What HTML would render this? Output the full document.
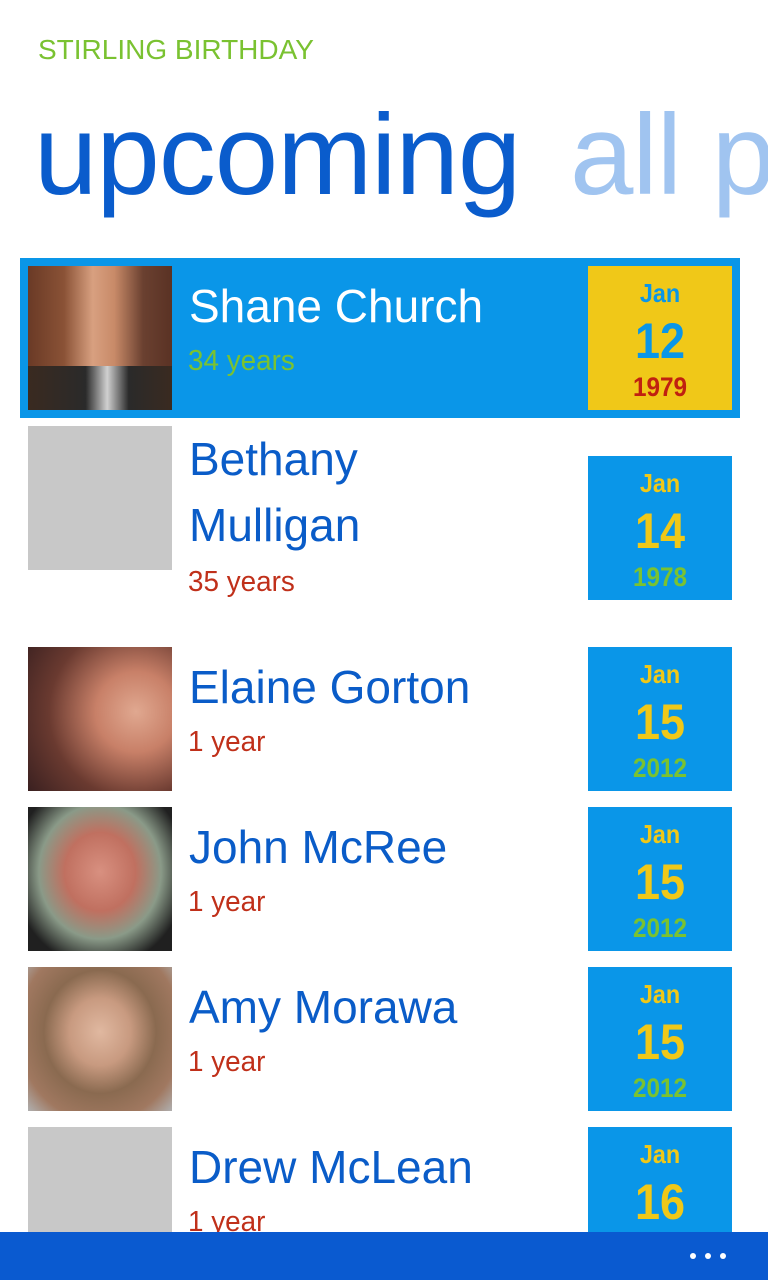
<!DOCTYPE html>
<html><head><style>
body{margin:0;width:768px;height:1280px;overflow:hidden;background:#fff;font-family:"Liberation Sans",sans-serif;position:relative}
.a{position:absolute}
.t{left:38px;top:34px;font-size:28px;color:#7ac231;}
.h{top:90px;font-size:114px;color:#0a5ccc;white-space:nowrap;letter-spacing:-1px}
.ph{left:28px;width:144px;height:144px;background:#c8c8c8}
.nm{left:189px;font-size:46px;color:#0a5cc8;white-space:nowrap;line-height:66px}
.ag{left:188px;font-size:29px;color:#c0301a;white-space:nowrap;transform:scaleX(.96);transform-origin:left}
.d{left:588px;width:144px;height:144px;background:#0a96e8;text-align:center;font-weight:bold;color:#f0c818}
.d .m{position:absolute;left:0;right:0;top:12px;font-size:26px;transform:scaleX(.9)}
.d .n{position:absolute;left:0;right:0;top:46px;font-size:50px;transform:scaleX(.9)}
.d .y{position:absolute;left:0;right:0;top:106px;font-size:27px;color:#7ac231;transform:scaleX(.9)}
</style></head><body>
<div class="a t">STIRLING BIRTHDAY</div>
<div class="a h" style="left:34px">upcoming</div>
<div class="a h" style="left:570px;color:#a0c4f0">all p</div>

<div class="a" style="left:20px;top:258px;width:720px;height:160px;background:#0a96e8"></div>
<div class="a ph" style="top:266px;background:linear-gradient(90deg,#6a3a26 0%,#8a5236 25%,#d8a080 45%,#c88a68 60%,#6a4030 80%,#5a3224)"></div>
<div class="a ph" style="top:366px;height:44px;background:linear-gradient(90deg,#3a2a20,#2a2a2a 40%,#d0d0d0 55%,#2a2a2a 70%,#3a2a20)"></div>
<div class="a nm" style="top:273px;color:#fff">Shane Church</div>
<div class="a ag" style="top:345px;color:#7ac231">34 years</div>
<div class="a d" style="top:266px;background:#f0c818;color:#0a96e8"><div class="m">Jan</div><div class="n">12</div><div class="y" style="color:#c02010">1979</div></div>

<div class="a ph" style="top:426px"></div>
<div class="a nm" style="top:426px">Bethany<br>Mulligan</div>
<div class="a ag" style="top:566px">35 years</div>
<div class="a d" style="top:456px"><div class="m">Jan</div><div class="n">14</div><div class="y">1978</div></div>

<div class="a ph" style="top:647px;background:radial-gradient(circle at 75% 45%,#e0a890 0,#c88068 30%,#6a3a30 65%,#3a2020)"></div>
<div class="a nm" style="top:654px">Elaine Gorton</div>
<div class="a ag" style="top:726px">1 year</div>
<div class="a d" style="top:647px"><div class="m">Jan</div><div class="n">15</div><div class="y">2012</div></div>

<div class="a ph" style="top:807px;background:radial-gradient(ellipse at 50% 45%,#d89080 0,#c07060 35%,#8a9a88 60%,#202020 85%)"></div>
<div class="a nm" style="top:814px">John McRee</div>
<div class="a ag" style="top:886px">1 year</div>
<div class="a d" style="top:807px"><div class="m">Jan</div><div class="n">15</div><div class="y">2012</div></div>

<div class="a ph" style="top:967px;background:radial-gradient(ellipse at 50% 45%,#e0b8a0 0,#c89a80 30%,#8a6a50 55%,#a07860 80%,#b0b0b0)"></div>
<div class="a nm" style="top:974px">Amy Morawa</div>
<div class="a ag" style="top:1046px">1 year</div>
<div class="a d" style="top:967px"><div class="m">Jan</div><div class="n">15</div><div class="y">2012</div></div>

<div class="a ph" style="top:1127px"></div>
<div class="a nm" style="top:1134px">Drew McLean</div>
<div class="a ag" style="top:1206px">1 year</div>
<div class="a d" style="top:1127px"><div class="m">Jan</div><div class="n">16</div><div class="y">2012</div></div>

<div class="a" style="left:0;top:1232px;width:768px;height:48px;background:#0a5ad0"></div>
<div class="a" style="left:690px;top:1253px;width:6px;height:6px;border-radius:3px;background:#fff;box-shadow:15px 0 #fff,30px 0 #fff"></div>
</body></html>
